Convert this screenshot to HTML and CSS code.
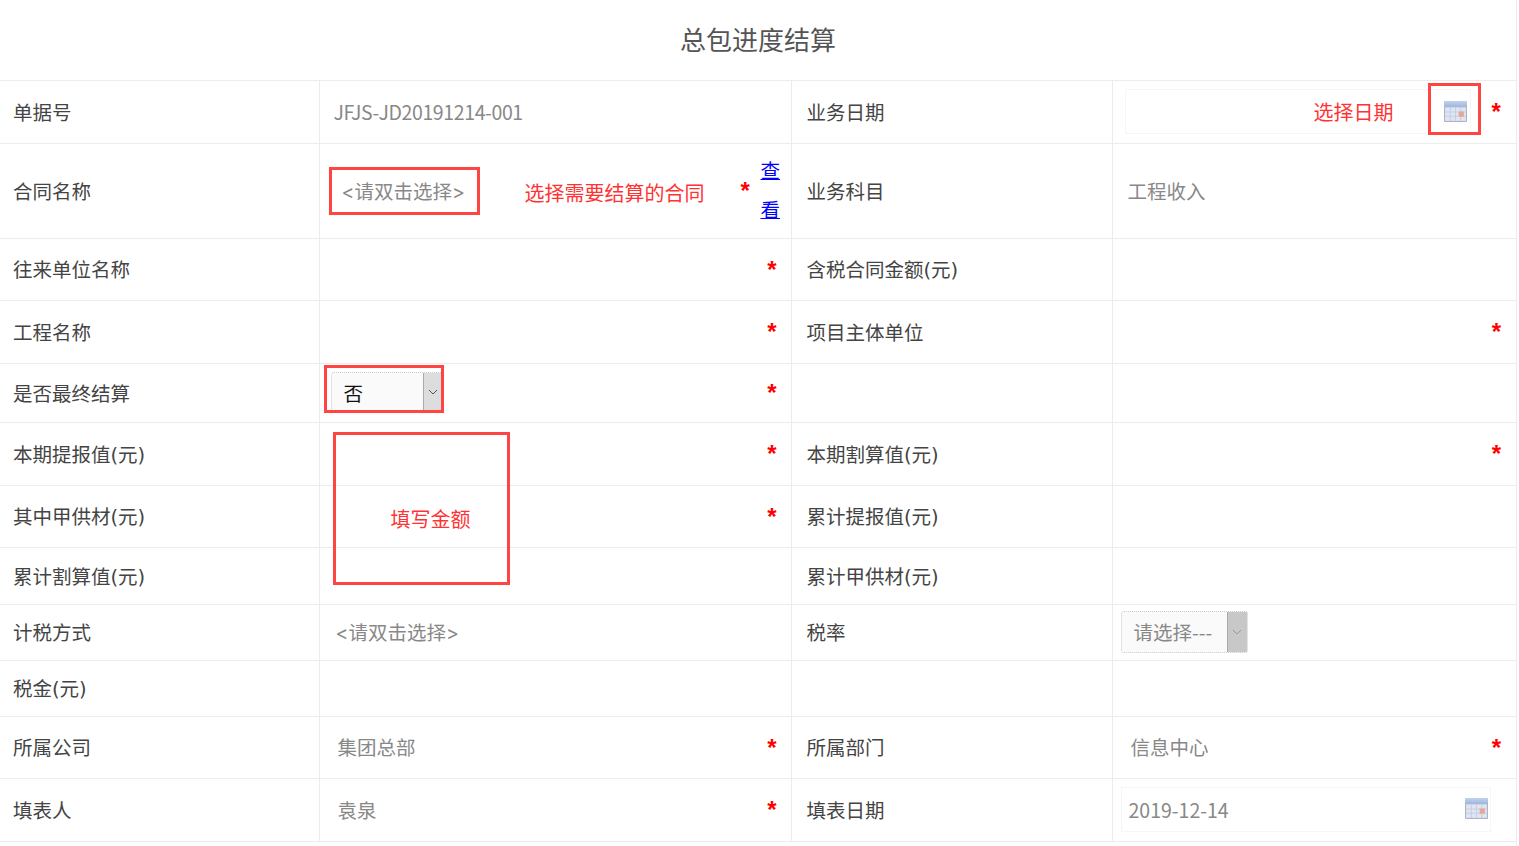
FILE: index.html
```html
<!DOCTYPE html>
<html lang="zh-CN">
<head>
<meta charset="utf-8">
<title>总包进度结算</title>
<link rel="stylesheet" href="styles.css">
</head>
<body>
<div class="sheet">
  <h1 class="title">总包进度结算</h1>
  <table class="form">
    <colgroup><col class="c1"><col class="c2"><col class="c3"><col class="c4"></colgroup>
    <tr class="r63">
      <td class="label">单据号</td>
      <td><div class="val pl14 muted code">JFJS-JD20191214-001</div></td>
      <td class="label">业务日期</td>
      <td>
        <div class="val">
          <div class="date date-a">
            <span class="hint">选择日期</span>
            <svg class="cal" viewBox="0 0 22 20"><defs><linearGradient id="calTop" x1="0" y1="0" x2="0" y2="1"><stop offset="0" stop-color="#c3d2ec"/><stop offset="1" stop-color="#9db4de"/></linearGradient></defs><rect width="22" height="20" rx="1" fill="#aab4c6"/><rect width="22" height="6" fill="url(#calTop)"/><rect x="1" y="6" width="20" height="13" fill="#dfe5f2"/><path d="M1 10.500H21M1 14.500H21M6 6V19M11 6V19M16 6V19" stroke="#c6d0e4"/><rect x="14" y="10" width="5" height="5" fill="#e8a598"/></svg>
          </div>
          <span class="star">*</span>
        </div>
      </td>
    </tr>
    <tr class="r95">
      <td class="label">合同名称</td>
      <td>
        <div class="val pl22">
          <span class="muted pick">&lt;请双击选择&gt;</span>
          <span class="hint h-contract">选择需要结算的合同</span>
          <span class="star s-contract">*</span>
          <a class="view" href="#">查看</a>
        </div>
      </td>
      <td class="label">业务科目</td>
      <td><div class="val pl15 muted">工程收入</div></td>
    </tr>
    <tr class="r62">
      <td class="label">往来单位名称</td>
      <td><div class="val end"><span class="star">*</span></div></td>
      <td class="label">含税合同金额(元)</td>
      <td></td>
    </tr>
    <tr class="r63">
      <td class="label">工程名称</td>
      <td><div class="val end"><span class="star">*</span></div></td>
      <td class="label">项目主体单位</td>
      <td><div class="val end"><span class="star">*</span></div></td>
    </tr>
    <tr class="r59">
      <td class="label">是否最终结算</td>
      <td>
        <div class="val">
          <div class="sel sel-a"><span class="sel-text">否</span><span class="arrow"><svg viewBox="0 0 10 6"><path d="M1 1l4 4 4-4" fill="none" stroke="#555"/></svg></span></div>
          <span class="star">*</span>
        </div>
      </td>
      <td class="label"></td>
      <td></td>
    </tr>
    <tr class="r63">
      <td class="label">本期提报值(元)</td>
      <td><div class="val end"><span class="star">*</span></div></td>
      <td class="label">本期割算值(元)</td>
      <td><div class="val end"><span class="star">*</span></div></td>
    </tr>
    <tr class="r62">
      <td class="label">其中甲供材(元)</td>
      <td><div class="val end"><span class="star">*</span></div></td>
      <td class="label">累计提报值(元)</td>
      <td></td>
    </tr>
    <tr class="r57">
      <td class="label">累计割算值(元)</td>
      <td></td>
      <td class="label">累计甲供材(元)</td>
      <td></td>
    </tr>
    <tr class="r56">
      <td class="label">计税方式</td>
      <td><div class="val pl16 muted pick-font">&lt;请双击选择&gt;</div></td>
      <td class="label">税率</td>
      <td>
        <div class="val">
          <div class="sel sel-b"><span class="sel-text muted">请选择---</span><span class="arrow dark"><svg viewBox="0 0 10 6"><path d="M1 1l4 4 4-4" fill="none" stroke="#999"/></svg></span></div>
        </div>
      </td>
    </tr>
    <tr class="r56">
      <td class="label">税金(元)</td>
      <td></td>
      <td class="label"></td>
      <td></td>
    </tr>
    <tr class="r62">
      <td class="label">所属公司</td>
      <td><div class="val between pl18"><span class="muted">集团总部</span><span class="star">*</span></div></td>
      <td class="label">所属部门</td>
      <td><div class="val between pl18"><span class="muted">信息中心</span><span class="star">*</span></div></td>
    </tr>
    <tr class="r63">
      <td class="label">填表人</td>
      <td><div class="val between pl18"><span class="muted">袁泉</span><span class="star">*</span></div></td>
      <td class="label">填表日期</td>
      <td>
        <div class="val">
          <div class="date date-b">
            <span class="muted">2019-12-14</span>
            <svg class="cal" viewBox="0 0 22 20"><rect width="22" height="20" rx="1" fill="#aab4c6"/><rect width="22" height="6" fill="url(#calTop)"/><rect x="1" y="6" width="20" height="13" fill="#dfe5f2"/><path d="M1 10.500H21M1 14.500H21M6 6V19M11 6V19M16 6V19" stroke="#c6d0e4"/><rect x="14" y="10" width="5" height="5" fill="#e8a598"/></svg>
          </div>
        </div>
      </td>
    </tr>
  </table>

  <div class="mark m-date"></div>
  <div class="mark m-contract"></div>
  <div class="mark m-final"></div>
  <div class="mark m-amount"><span class="hint">填写金额</span></div>
</div>
</body>
</html>
```

FILE: styles.css
```css
* { box-sizing: border-box; }
html, body { margin: 0; padding: 0; background: #fff; overflow: hidden; }
body {
  height: 846px;
  font-family: "Noto Sans CJK SC", "Noto Sans", sans-serif;
  font-size: 19.5px;
  color: #444;
}
.sheet { position: relative; width: 1517px; height: 846px; border-right: 1px solid #ececec; }
.title {
  margin: 0;
  height: 80px;
  line-height: 78px;
  text-align: center;
  font-size: 26px;
  font-weight: 400;
  color: #555;
}
.form { width: 1516px; table-layout: fixed; border-collapse: collapse; border-top: 1px solid #ececec; }
.form td { padding: 0 0 2px; border-bottom: 1px solid #ececec; border-right: 1px solid #ececec; vertical-align: middle; }
.form td:last-child { border-right: 0; }
.c1 { width: 319px; }
.c2 { width: 472px; }
.c3 { width: 321px; }
.c4 { width: 404px; }
.r63 { height: 63px; }
.r95 { height: 95px; }
.r62 { height: 62px; }
.r59 { height: 59px; }
.r57 { height: 57px; }
.r56 { height: 56px; }
.form td.label { padding-left: 13px; font-family: "DejaVu Sans", "Noto Sans CJK SC", sans-serif; }
.form td:nth-child(3).label { padding-left: 15px; }
.val { display: flex; align-items: center; padding-right: 15px; }
.form td:nth-child(2) .val { padding-right: 14px; }
.form td:nth-child(2) .pl22 { padding-right: 0; }
.end { justify-content: flex-end; }
.between { justify-content: space-between; }
.pl14 { padding-left: 14px; }
.pl15 { padding-left: 15px; }
.pl16 { padding-left: 16px; }
.pl18 { padding-left: 18px; }
.pl22 { padding-left: 22px; padding-right: 0; }
.muted { color: #888; }
.code { letter-spacing: -.38px; }
.pick, .pick-font { font-family: "Inter", "Noto Sans CJK SC", sans-serif; }
.hint { color: #f33; font-size: 20px; }
.star { color: #f00; font: 700 24px/1 "Liberation Sans", sans-serif; position: relative; top: 1px; }
.pick { width: 183px; }
.h-contract { width: 216px; position: relative; top: 2px; }
.s-contract { width: 20px; top: 1px; }
.view { width: 20px; line-height: 39px; color: #00f; text-decoration: underline; word-break: break-all; position: relative; top: -1px; }
.date { display: flex; align-items: center; justify-content: space-between; border: 1px solid #f6f6f6; }
.date-a { width: 346px; height: 45px; margin: 1px 21px 0 12px; padding: 0 3px 0 188px; }
.date-b { width: 370px; height: 45px; margin-left: 8px; padding: 0 2px 0 7px; }
.cal { width: 23px; height: 21px; margin-top: -1px; filter: blur(.5px); }
.sel { display: flex; align-items: stretch; border: 1px dotted #ccc; border-radius: 3px; background: #fafafa; }
.sel-a { width: 113px; height: 40px; margin-left: 11px; margin-right: auto; color: #111; }
.sel-b { width: 127px; height: 42px; margin-left: 8px; }
.sel-text { flex: 1; display: flex; align-items: center; padding-left: 12px; }
.arrow { width: 20px; display: flex; align-items: center; justify-content: center; background: #ddd; border-left: 1px solid #aaa; }
.arrow svg { width: 10px; height: 6px; }
.arrow.dark { background: #c8c8c8; }
.mark { position: absolute; border: 3px solid #f44; display: flex; align-items: center; justify-content: center; }
.m-date { left: 1428px; top: 83px; width: 53px; height: 52px; }
.m-contract { left: 329px; top: 167px; width: 151px; height: 48px; }
.m-final { left: 324px; top: 365px; width: 120px; height: 48px; }
.m-amount { left: 333px; top: 432px; width: 177px; height: 153px; }
.m-amount .hint { position: relative; left: 9px; top: 10px; }
```
